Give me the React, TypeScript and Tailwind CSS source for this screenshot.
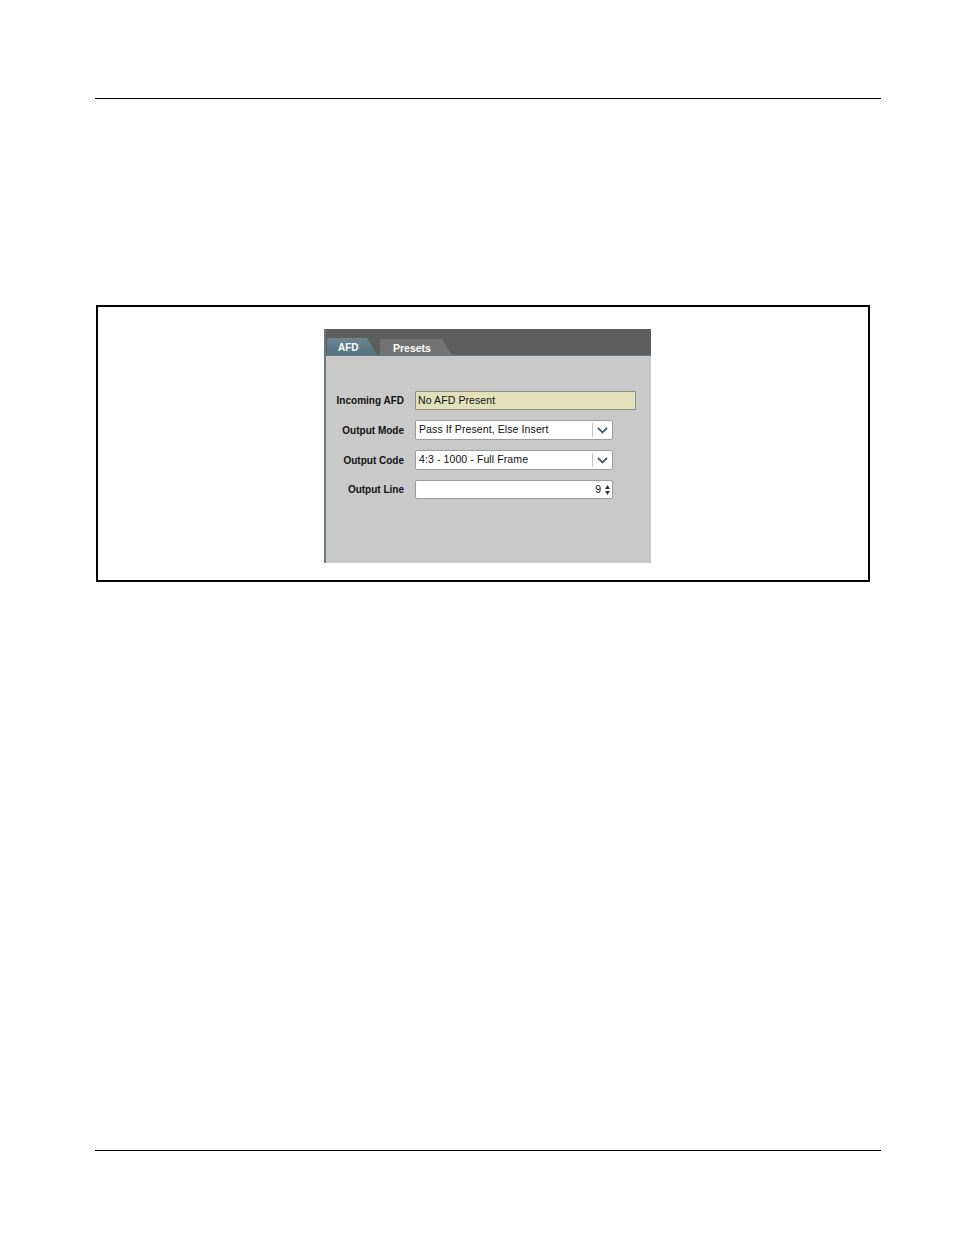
import React from 'react';

const font = "font-['Liberation_Sans',Arial,sans-serif]";

const Chevron: React.FC = () => (
  <svg width="11" height="7" viewBox="0 0 11 7" fill="none">
    <path d="M1 1l4.5 4.5L10 1" stroke="#4a5f70" strokeWidth="1.8" />
  </svg>
);

const Select: React.FC<{ value: string }> = ({ value }) => (
  <div className="flex h-[20px] w-[198px] items-stretch rounded-[2px] border border-[#9c9c9c] bg-white">
    <div className="flex flex-1 items-center pl-[3px] text-[10.5px] tracking-[0.1px] text-[#111]">{value}</div>
    <div className="my-[2px] w-px bg-[#c4c4c4]" />
    <div className="flex w-[19px] items-center justify-center">
      <Chevron />
    </div>
  </div>
);

const Row: React.FC<{ label: string; children: React.ReactNode }> = ({ label, children }) => (
  <div className="flex items-center">
    <div className="w-[70px] pr-[1px] text-right text-[10px] font-bold text-[#111]">{label}</div>
    <div className="ml-[10px]">{children}</div>
  </div>
);

const App: React.FC = () => {
  return (
    <div className={`w-[954px] h-[1235px] bg-white ${font}`}>
      <div className="pt-[98px] pl-[95px]">
        <div className="h-px w-[786px] bg-black" />

        {/* figure frame */}
        <div className="mt-[206px] ml-[1px] h-[277px] w-[774px] border-2 border-black pt-[22px] pl-[226px]">
          <div className="flex h-[234px] w-[327px] flex-col border-l-2 border-[#6e7679]">
            {/* tab bar */}
            <div className="flex h-[27px] items-end gap-[3px] border-b border-[#5d7c88] bg-[#5e5e5e] pl-[1px]">
              <div className="flex h-[17px] w-[50px] items-start rounded-tl-[3px] bg-gradient-to-b from-[#6b8793] to-[#55717d] pl-[11px] pt-[2px] text-[10px] font-bold text-white [clip-path:polygon(0_0,80%_0,100%_100%,0_100%)]">
                AFD
              </div>
              <div className="flex h-[16px] w-[72px] items-start rounded-tl-[3px] bg-[#737373] pl-[13px] pt-[2px] text-[10.5px] font-bold text-white [clip-path:polygon(0_0,86%_0,100%_100%,0_100%)]">
                Presets
              </div>
            </div>

            {/* body */}
            <div className="flex flex-1 flex-col gap-[10px] bg-[#c9c9c9] pl-[9px] pt-[35px]">
              <Row label="Incoming AFD">
                <div className="flex h-[19px] w-[221px] items-center rounded-[1px] border border-[#8c8c80] bg-[#e1e0bb] pl-[2px] text-[10.5px] tracking-[0.1px] text-[#111]">
                  No AFD Present
                </div>
              </Row>
              <Row label="Output Mode">
                <Select value="Pass If Present, Else Insert" />
              </Row>
              <Row label="Output Code">
                <Select value="4:3 - 1000 - Full Frame" />
              </Row>
              <Row label="Output Line">
                <div className="flex h-[19px] w-[198px] items-stretch rounded-[2px] border border-[#9c9c9c] bg-white">
                  <div className="flex flex-1 items-center justify-end pr-[2px] text-[10.5px] text-[#111]">9</div>
                  <div className="flex w-[9px] flex-col items-center justify-center gap-[2px]">
                    <svg width="5" height="4" viewBox="0 0 5 4">
                      <path d="M0 4L2.5 0L5 4z" fill="#333" />
                    </svg>
                    <svg width="5" height="4" viewBox="0 0 5 4">
                      <path d="M0 0L2.5 4L5 0z" fill="#333" />
                    </svg>
                  </div>
                </div>
              </Row>
            </div>
          </div>
        </div>

        <div className="mt-[568px] h-px w-[786px] bg-black" />
      </div>
    </div>
  );
};

export default App;
